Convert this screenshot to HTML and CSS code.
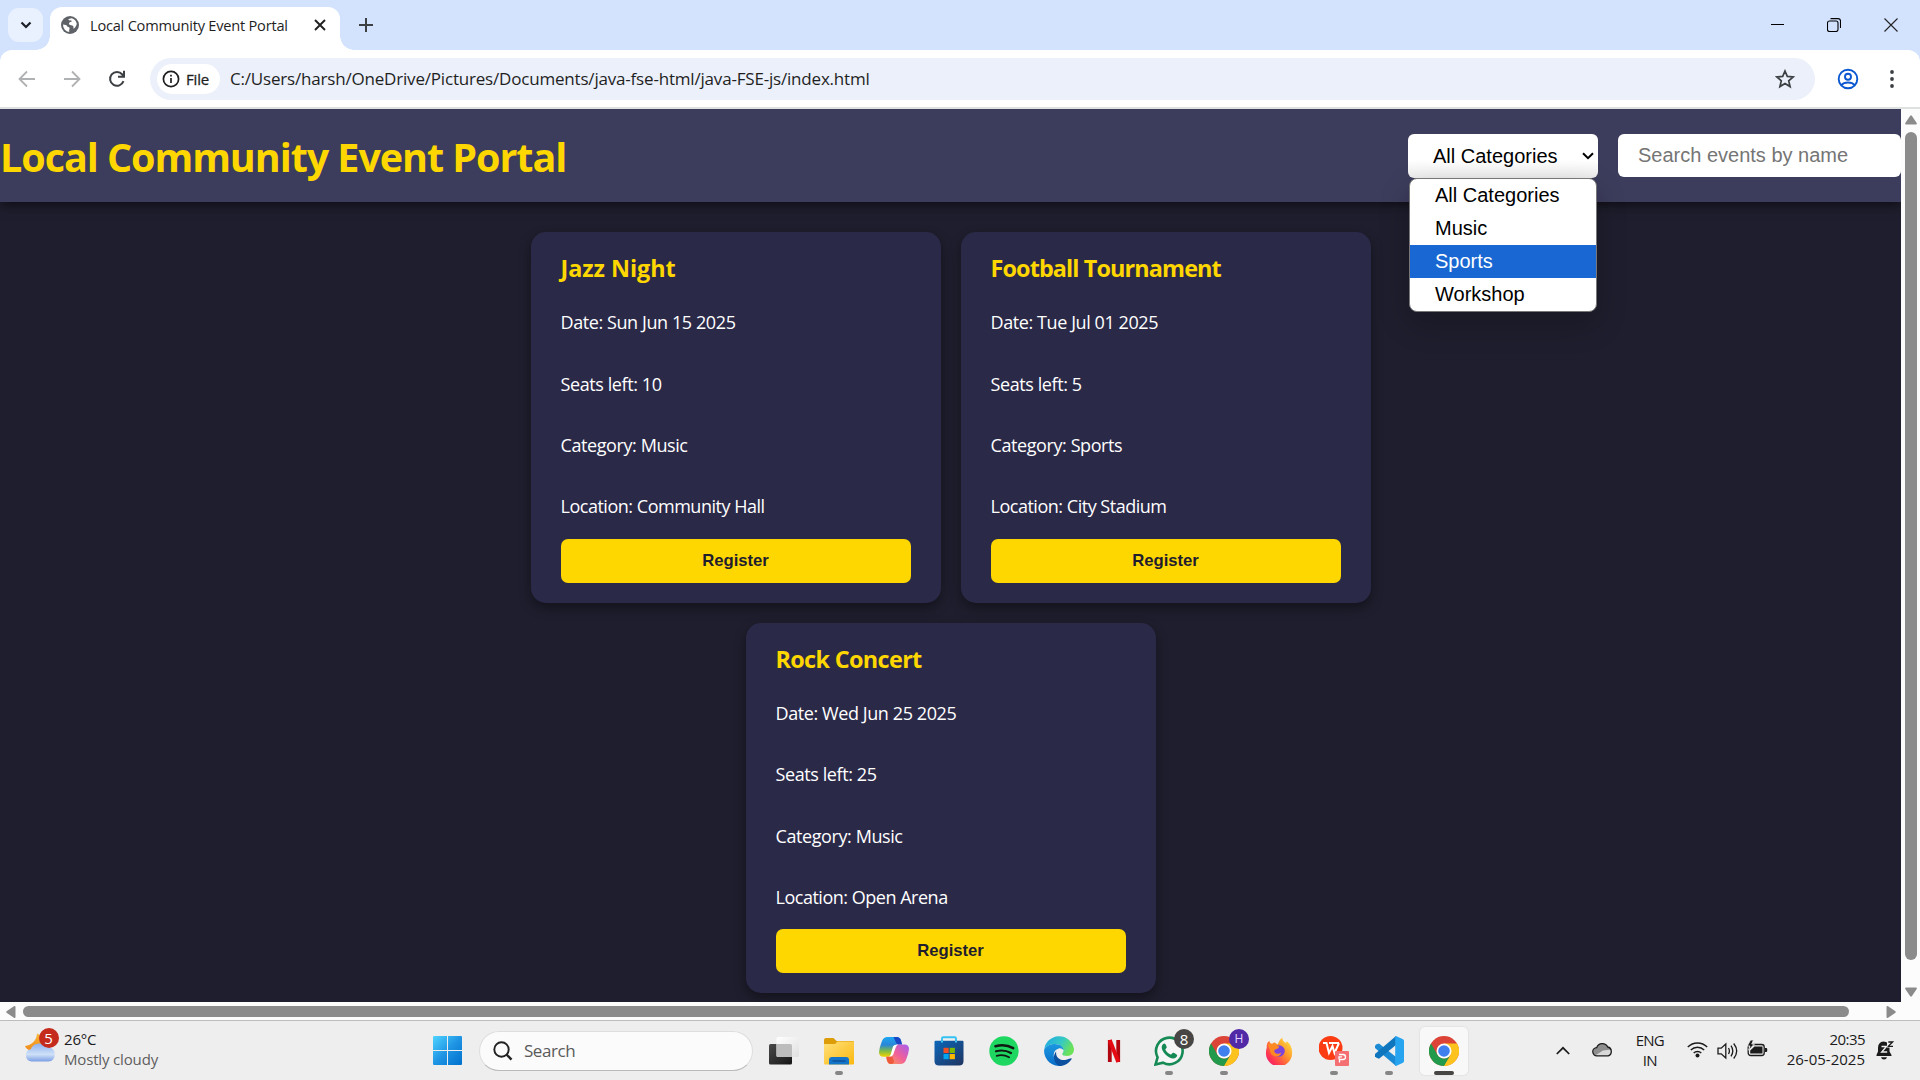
FILE: index.html
```
<!DOCTYPE html>
<html lang="en">
<head>
<meta charset="utf-8">
<title>Local Community Event Portal</title>
<link rel="stylesheet" href="styles.css">
</head>
<body>
<div class="desktop">

  <div class="tabstrip">
    <div class="tab-search"><svg width="12" height="8" viewBox="0 0 12 8"><path d="M1.5 1.5 6 6l4.500-4.500" fill="none" stroke="#1c1f24" stroke-width="2.200"/></svg></div>
    <div class="tab">
      <svg class="tab-globe" width="18" height="18" viewBox="0 0 18 18"><circle cx="9" cy="9" r="9" fill="#5f6368"/><path d="M2 8.600c2 .2 3.700.4 4 1.400.4 1.300 2.200.8 2.500 2 .2 1-.5 1.700-.3 3.900A7 7 0 0 1 2 8.600ZM7.200 3.400c1-.3 1.900-1 3.300-1.100 1.300.3 2.600 1 3.500 2 .9.900 1.600 2.300 1.800 3.700-.8 1.900-1.400 3.700-3 4.800-.7-.8.1-2-.7-2.800-1-.9-2.800-.2-3.800-1.400-.8-1.200.1-2.400 1.200-2.600 1-.2 1.500-.7 1.200-1.300-.7-.7-2.500.2-3.500-1.300Z" fill="#fff"/></svg>
      <span class="tab-title">Local Community Event Portal</span>
      <svg class="tab-close" width="12" height="12" viewBox="0 0 12 12"><path d="m1 1 10 10M11 1 1 11" stroke="#1f1f1f" stroke-width="1.900"/></svg>
    </div>
    <svg class="tab-new" width="14" height="14" viewBox="0 0 14 14"><path d="M7 0v14M0 7h14" stroke="#3c4043" stroke-width="2"/></svg>
    <div class="window-controls">
      <svg width="14" height="14" viewBox="0 0 14 14"><path d="M1 6.500h13" stroke="#000" stroke-width="1"/></svg>
      <svg width="14" height="14" viewBox="0 0 14 14"><path d="M.5 5a2 2 0 0 1 2-2H9a2 2 0 0 1 2 2v6.500a2 2 0 0 1-2 2H2.500a2 2 0 0 1-2-2ZM3.500.6H11a2.500 2.500 0 0 1 2.500 2.500V10" fill="none" stroke="#000" stroke-width="1.100"/></svg>
      <svg width="14" height="14" viewBox="0 0 14 14"><path d="m.5.5 13 13m0-13-13 13" stroke="#222" stroke-width="1.100"/></svg>
    </div>
  </div>

  <div class="toolbar">
    <svg class="nav-icon" width="18" height="18" viewBox="0 0 18 18"><path d="M17 9H2.500M9 1.500 1.500 9 9 16.500" fill="none" stroke="#b0b1b3" stroke-width="1.800"/></svg>
    <svg class="nav-icon" width="18" height="18" viewBox="0 0 18 18"><path d="M1 9h14.500M9 1.500 16.500 9 9 16.500" fill="none" stroke="#b0b1b3" stroke-width="1.800"/></svg>
    <svg class="nav-icon" width="18" height="18" viewBox="0 0 18 18"><path d="M15.500 11.200A6.900 6.900 0 1 1 14.300 4.500L16 6.500M16 .8v6h-6" fill="none" stroke="#3c4043" stroke-width="2"/></svg>
    <div class="omnibox">
      <div class="chip">
        <svg width="18" height="18" viewBox="0 0 18 18"><circle cx="9" cy="9" r="7.600" fill="none" stroke="#1f1f1f" stroke-width="1.700"/><path d="M9 8v5M9 4.800v1.800" stroke="#1f1f1f" stroke-width="1.700"/></svg>
        <span>File</span>
      </div>
      <span class="url">C:/Users/harsh/OneDrive/Pictures/Documents/java-fse-html/java-FSE-js/index.html</span>
      <svg class="star" width="20" height="20" viewBox="0 0 20 20"><path d="m10 2 2.300 5.400 5.900.5-4.500 3.900 1.400 5.800-5.100-3.100-5.100 3.100 1.400-5.800L1.800 7.900l5.900-.5Z" fill="none" stroke="#3c4043" stroke-width="1.700"/></svg>
    </div>
    <svg class="profile" width="22" height="22" viewBox="0 0 22 22"><g fill="none" stroke="#0b57d0" stroke-width="1.900"><circle cx="11" cy="11" r="9.300"/><circle cx="11" cy="8.700" r="3"/><path d="M4.300 17.200c3-3.600 10.400-3.600 13.400 0"/></g></svg>
    <svg class="menu-dots" width="4" height="20" viewBox="0 0 4 20"><g fill="#3c4043"><circle cx="2" cy="3" r="1.900"/><circle cx="2" cy="10" r="1.900"/><circle cx="2" cy="17" r="1.900"/></g></svg>
  </div>

  <div class="viewport">
    <div class="page">
      <header class="page-header">
        <h1>Local Community Event Portal</h1>
        <div class="filters">
          <div class="category">
            <div class="select"><span>All Categories</span><svg width="12" height="8" viewBox="0 0 12 8"><path d="M1 1.200 6 6.200l5-5" fill="none" stroke="#000" stroke-width="2"/></svg></div>
            <ul class="options">
              <li>All Categories</li>
              <li>Music</li>
              <li class="active">Sports</li>
              <li>Workshop</li>
            </ul>
          </div>
          <div class="search-field">Search events by name</div>
        </div>
      </header>
      <main class="events">
        <article class="event">
          <h2 class="title-short">Jazz Night</h2>
          <p>Date: Sun Jun 15 2025</p><p>Seats left: 10</p><p>Category: Music</p><p>Location: Community Hall</p>
          <button>Register</button>
        </article>
        <article class="event">
          <h2>Football Tournament</h2>
          <p>Date: Tue Jul 01 2025</p><p>Seats left: 5</p><p>Category: Sports</p><p>Location: City Stadium</p>
          <button>Register</button>
        </article>
        <article class="event">
          <h2 class="title-medium">Rock Concert</h2>
          <p>Date: Wed Jun 25 2025</p><p>Seats left: 25</p><p>Category: Music</p><p>Location: Open Arena</p>
          <button>Register</button>
        </article>
      </main>
    </div>
    <div class="vscroll">
      <svg width="12" height="10" viewBox="0 0 12 10"><path d="M5 .9Q6-.5 7 .9l4.700 7Q12.300 9.500 11 9.500H1Q-.3 9.500.3 7.900Z" fill="#8b8b8b"/></svg>
      <div class="vthumb"></div>
      <svg width="12" height="10" viewBox="0 0 12 10"><path d="M5 9.100q1 1.400 2 0l4.700-7Q12.300.5 11 .5H1Q-.3.5.3 2.100Z" fill="#8b8b8b"/></svg>
    </div>
  </div>
  <div class="hscroll">
    <svg width="10" height="12" viewBox="0 0 10 12"><path d="M.9 5Q-.5 6 .9 7l7 4.700Q9.500 12.300 9.500 11V1Q9.500-.3 7.900.3Z" fill="#8b8b8b"/></svg>
    <div class="hthumb"></div>
    <svg width="10" height="12" viewBox="0 0 10 12"><path d="M9.100 5q1.400 1 0 2l-7 4.700Q.5 12.300.5 11V1Q.5-.3 2.100.3Z" fill="#8b8b8b"/></svg>
  </div>

  <div class="taskbar">
    <svg width="0" height="0" class="defs"><defs>
      <linearGradient id="win" x1="0" y1="0" x2="1" y2="1"><stop offset="0" stop-color="#4fd4ff"/><stop offset=".5" stop-color="#1f95e4"/><stop offset="1" stop-color="#0070cc"/></linearGradient>
      <linearGradient id="moon" x1="0" y1="0" x2="0" y2="1"><stop offset="0" stop-color="#f7b634"/><stop offset="1" stop-color="#f08a1c"/></linearGradient>
      <linearGradient id="cloud" x1="0" y1="0" x2="0" y2="1"><stop offset="0" stop-color="#8fb2ef"/><stop offset=".6" stop-color="#cfe0f8"/><stop offset="1" stop-color="#7c9fe4"/></linearGradient>
      <linearGradient id="dark" x1="0" y1="0" x2="1" y2="1"><stop offset="0" stop-color="#4a4a4a"/><stop offset="1" stop-color="#151515"/></linearGradient>
      <linearGradient id="light" x1="0" y1="0" x2="1" y2="1"><stop offset="0" stop-color="#fff"/><stop offset="1" stop-color="#e0e0e0"/></linearGradient>
      <linearGradient id="folder" x1="0" y1="0" x2="1" y2="1"><stop offset="0" stop-color="#ffe07a"/><stop offset="1" stop-color="#fbb80f"/></linearGradient>
      <linearGradient id="copL" x1="0" y1="0" x2="0" y2="1"><stop offset="0" stop-color="#1ba6f2"/><stop offset=".4" stop-color="#2a86d8"/><stop offset=".7" stop-color="#7cbb4a"/><stop offset="1" stop-color="#f5d400"/></linearGradient>
      <linearGradient id="copR" x1="1" y1="0" x2="0" y2="1"><stop offset="0" stop-color="#a45cf0"/><stop offset=".5" stop-color="#f0609a"/><stop offset="1" stop-color="#ffa050"/></linearGradient>
      <linearGradient id="store" x1="0" y1="0" x2="1" y2="1"><stop offset="0" stop-color="#0b67bb"/><stop offset="1" stop-color="#20345f"/></linearGradient>
      <linearGradient id="edgeT" x1="0" y1="0" x2="1" y2=".4"><stop offset="0" stop-color="#1fa5e4"/><stop offset=".6" stop-color="#35c9c4"/><stop offset="1" stop-color="#6be25a"/></linearGradient>
      <linearGradient id="edgeB" x1="0" y1="0" x2="0" y2="1"><stop offset="0" stop-color="#1c98e0"/><stop offset="1" stop-color="#0a6cc8"/></linearGradient>
      <linearGradient id="fox" x1="1" y1="0" x2="0" y2="1"><stop offset="0" stop-color="#fff04a"/><stop offset=".4" stop-color="#ff9a2a"/><stop offset=".75" stop-color="#ff3650"/><stop offset="1" stop-color="#e31587"/></linearGradient>
      <symbol id="chrome" viewBox="0 0 30 30"><circle cx="15" cy="15" r="15" fill="#db4437"/><path d="M15 7.500h13A15 15 0 0 1 14.500 30l7-11.300Z" fill="#fcc31e"/><path d="M2 7.500 8.500 18.800A7.500 7.500 0 0 0 21.500 18.800L15 30A15 15 0 0 1 2 7.500Z" fill="#229a4c"/><circle cx="15" cy="15" r="7.500" fill="#fff"/><circle cx="15" cy="15" r="5.800" fill="#3f7fee"/></symbol>
    </defs></svg>

    <div class="weather">
      <div class="weather-icon">
        <svg width="32" height="32" viewBox="0 0 32 32"><path d="M12 1.500A13 13 0 0 1 0 14c2 5 10 7 15 3s5-12-3-15.500Z" fill="url(#moon)"/><path d="M6.500 29.500a6.200 6.200 0 0 1-.8-12.200 8.500 8.500 0 0 1 15-2 7 7 0 0 1 9 7 6.500 6.500 0 0 1-6 7.200Z" fill="url(#cloud)"/></svg>
        <span class="badge badge-red">5</span>
      </div>
      <div class="weather-text"><span>26°C</span><span class="muted">Mostly cloudy</span></div>
    </div>

    <div class="apps">
      <div class="app start"><svg width="29" height="29" viewBox="0 0 29 29"><path d="M1 0h13v14H0V1Q0 0 1 0Zm14 0h13q1 0 1 1v13H15ZM0 15h14v14H1q-1 0-1-1Zm15 0h14v13q0 1-1 1H15Z" fill="url(#win)"/></svg></div>
      <div class="task-search"><svg width="20" height="20" viewBox="0 0 20 20"><circle cx="8.500" cy="8.500" r="7.200" fill="none" stroke="#222" stroke-width="1.900"/><path d="m13.500 13.500 5 5.200" stroke="#222" stroke-width="2.400"/></svg><span>Search</span></div>
      <div class="app"><svg width="30" height="30" viewBox="0 0 30 30"><rect x="0" y="8" width="23" height="20.500" rx="1.500" fill="url(#dark)"/><rect x="7.500" y="1" width="22.500" height="20" rx="1.500" fill="url(#light)"/><path d="M7.500 8H21.500q1.500 0 1.500 1.500V21H9q-1.500 0-1.500-1.500Z" fill="#bdbdbd"/></svg></div>
      <div class="app running"><svg width="30" height="30" viewBox="0 0 30 30"><path d="M0 4q0-2 2-2h7.500l3 3H29q1 0 1 1v3H0Z" fill="#dc9d08"/><path d="M0 8h11l2.500-2.500H30v22q0 1-1 1H1q-1 0-1-1Z" fill="url(#folder)"/><path d="M5 28.500V24q0-3 3-3h14q3 0 3 3v4.500Z" fill="#1474c8"/><path d="M8.500 25h13" stroke="#0b4d95" stroke-width="1.300"/></svg></div>
      <div class="app"><svg width="30" height="30" viewBox="0 0 30 30"><path d="M15 1h3q3 0 4 3.500l1 4h-4q-3 0-4 3l-2.500 7.500q-.8 1.800-3 1.800H4.500Q0 20.800 0 16q.5-5 3-11Q4.500 1 8.500 1Z" fill="url(#copL)"/><path d="M14.500 1H18q3 0 4 3.500l1 4h-3.500q-2 0-3-3Z" fill="#1846c4"/><path d="M15 28h-3q-3 0-4-3.500l-.8-3.700h2.300q2.200 0 3-1.800L15 11.500q1-3 4-3h6.500Q30 8.500 30 13q-.5 5-3 11-1.500 4-5.500 4Z" fill="url(#copR)"/><path d="M7.200 20.800h2.300q2.200 0 3-1.800l2.200 5q1 4-2.700 4-3 0-4-3.500Z" fill="#ee5a3c"/><path d="M14 10.500q1-2 5-2-1.500.8-2.300 3l-2.500 7q-.8 2.300-4.200 2.200l1.500-1.700Z" fill="#fff"/></svg></div>
      <div class="app"><svg width="30" height="30" viewBox="0 0 30 30"><path d="M8 6V2.500Q8 1.200 9.300 1.200h11.400Q22 1.200 22 2.500V6" fill="none" stroke="#35c2f3" stroke-width="1.900"/><path d="M1.500 4.800h27q1 0 1 1V25q0 4.500-4.500 4.500H5Q.5 29.500.5 25V5.800q0-1 1-1Z" fill="url(#store)"/><path d="M8 4.800v1.700M22 4.800v1.700" stroke="#49cdf6" stroke-width="1.900"/><path d="M9.500 11.800h5.200V17H9.500Z" fill="#f25022"/><path d="M15.700 11.800h5.200V17h-5.200Z" fill="#7fba00"/><path d="M9.500 18h5.200v5.200H9.500Z" fill="#00a4ef"/><path d="M15.700 18h5.200v5.200h-5.200Z" fill="#ffb900"/></svg></div>
      <div class="app"><svg width="30" height="30" viewBox="0 0 30 30"><circle cx="15" cy="15" r="14.700" fill="#1ed760"/><g fill="none" stroke="#101a13" stroke-linecap="round"><path d="M6.500 10.200c6-1.600 12.500-1 17.700 1.900" stroke-width="2.600"/><path d="M7 15.300c5-1.400 10.500-.8 15 1.700" stroke-width="2.200"/><path d="M7.700 19.800c4.300-1.100 8.600-.6 12.400 1.500" stroke-width="1.800"/></g></svg></div>
      <div class="app"><svg width="30" height="30" viewBox="0 0 30 30"><path d="M.2 14A15 15 0 0 1 30 13c.2 4-2.500 7-6.800 7-3.500 0-5-1-5-2 0-.8 1.300-1.200 1.300-3.500C19.300 10.500 15.500 8 11 8 5.500 8 1.500 10.500.2 14Z" fill="url(#edgeT)"/><path d="M.1 14.500C1 10.500 5.500 8 11 8c5 0 8.500 2.800 8.500 6.300-1-1.500-3-2.300-4.800-1.800-4 1-6 5-4.500 9.500 1.400 4.200 4.800 6.500 8 7.600A15 15 0 0 1 .1 14.500Z" fill="url(#edgeB)"/><path d="M12.200 15.500c-1 6 4.500 9.500 10 8.300 2.500-.5 4-1.600 5-1.500.6.100.6.700.2 1.300C24.500 28 20 30.300 15.500 30 10 27.500 8 20 12.200 15.500Z" fill="#0c50a0"/></svg></div>
      <div class="app"><svg width="30" height="30" viewBox="0 0 30 30"><path d="M10.800 4v22M19.200 4v22" stroke="#b1060f" stroke-width="3.800"/><path d="m10.700 4 8.600 22" stroke="#e50914" stroke-width="4"/></svg></div>
      <div class="app running"><svg width="30" height="30" viewBox="0 0 30 30"><path d="M1.500 28.500 3.600 21.300A13.300 13.300 0 1 1 9 26.700Z" fill="#f6f6f6" stroke="#158a55" stroke-width="2.600"/><path d="M10.500 7.500c-1 0-2.800 1.500-2.800 3.800 0 5 7 11.200 11.500 11.200 2 0 4-1.500 4-3.200 0-.8-3.500-2.700-4.200-2.500-.7.200-1.400 1.900-2.200 1.800-1.700-.2-5.200-3.600-5.500-5 0-.8 1.500-1.500 1.500-2.300 0-.6-1.300-3.800-2.300-3.800Z" fill="#158a55"/></svg><span class="badge badge-dark">8</span></div>
      <div class="app running"><svg width="30" height="30"><use href="#chrome"/></svg><span class="badge badge-purple">H</span></div>
      <div class="app"><svg width="28" height="28" viewBox="0 0 30 30"><path d="M2 11Q1 7 4.500 4q.5 3 3 3.500 1.500-1.500 3-1.500l3 2Q15 3 18.500.5q0 4 4 6 .5-1.500 1-2 6 5 5.500 13A14 14 0 0 1 1 17.500q0-4 1-6.500Z" fill="url(#fox)"/><circle cx="15" cy="15" r="6.200" fill="#7b44dc"/><path d="M3 8q5-1.500 8 .5l4.500 2q-1 2.500-4.500 3-2.500 2 .5 4 3 1.500 6-1-1.500 5-7 4Q5.500 19 5 13Z" fill="#ff8a22"/></svg></div>
      <div class="app running"><svg width="30" height="30" viewBox="0 0 30 30"><circle cx="11.500" cy="12" r="12" fill="#fb3c12"/><path d="M4 7h3.500l2.500 10 3.500-7 2 7L20 7M10 7h10" fill="none" stroke="#fff" stroke-width="2"/><path d="M16.500 15h12.500q1 0 1 1v13q0 1-1 1H17q-1 0-1-1V16Z" fill="#f36f72"/><path d="M20 18.500h4q2.500 0 2.500 2.500T24 23.500h-3.500v3M23 20.800h-3v2.500" fill="none" stroke="#fff" stroke-width="1.300"/></svg></div>
      <div class="app running"><svg width="30" height="30" viewBox="0 0 30 30"><path d="m2 8.500 3-1L22 21v9L1 12v-2.200Z" fill="#1a8ad4"/><path d="m2 21.500 3 1.200L22 9V0L1 18v2.200Z" fill="#0f75bd"/><path d="m22 0 7 3.200q1 .6 1 1.800v20q0 1.200-1 1.800L22 30q-.8-.4-.8-1.600V1.600Q21.200.4 22 0Z" fill="#27a4f0"/></svg></div>
      <div class="app running current"><svg width="30" height="30"><use href="#chrome"/></svg></div>
    </div>

    <div class="tray">
      <svg class="t-chevron" width="14" height="9" viewBox="0 0 14 9"><path d="m.8 8 6.200-6.200L13.200 8" fill="none" stroke="#1b1b1b" stroke-width="1.700"/></svg>
      <svg class="t-cloud" width="21" height="15" viewBox="0 0 21 15"><path d="M5 13.800a4.100 4.100 0 0 1-.3-8.200 6 6 0 0 1 11-.6 4.600 4.600 0 0 1 .6 8.800Z" fill="#d8d8d8"/><path d="M1.500 8q1-2.500 3.200-2.400a6 6 0 0 1 11-.6q2.500 0 4 2.500L11 8.500 4 13Q0 11 1.500 8Z" fill="#8e8e8e"/><path d="M5 13.800a4.100 4.100 0 0 1-.3-8.200 6 6 0 0 1 11-.6 4.600 4.600 0 0 1 .6 8.800Z" fill="none" stroke="#1b1b1b" stroke-width="1.300"/></svg>
      <div class="lang"><span>ENG</span><span>IN</span></div>
      <svg class="t-wifi" width="21" height="17" viewBox="0 0 21 17"><g fill="none" stroke="#1b1b1b" stroke-width="1.400"><path d="M.8 6a13.700 13.700 0 0 1 19.400 0M3.800 9a9.500 9.500 0 0 1 13.400 0M6.700 12a5.400 5.400 0 0 1 7.600 0"/></g><circle cx="10.500" cy="14.500" r="2" fill="#1b1b1b"/></svg>
      <svg class="t-sound" width="21" height="18" viewBox="0 0 21 18"><g fill="none" stroke="#1b1b1b" stroke-width="1.300"><path d="M1 6.200h3.200L8.800 2v14l-4.600-4.200H1ZM11.500 6q1.800 3 0 6M14 3.700q3.600 5.300 0 10.600M16.700 1.500q6 7.500 0 15"/></g></svg>
      <svg class="t-battery" width="21" height="17" viewBox="0 0 21 17"><rect x="1.200" y="4.500" width="16" height="11" rx="2.500" fill="none" stroke="#1b1b1b" stroke-width="1.300"/><path d="M7.500 6.500h8v7H3.200V10.500ZM18 8h1.500q.8 0 .8 2t-.8 2H18Z" fill="#1b1b1b"/><path d="M3.500 0 .2 6h2.700L1.700 10.200l5.700-6.200H4.800L6.500 0Z" fill="#1b1b1b" stroke="#eee" stroke-width=".9"/></svg>
      <div class="clock"><span class="time">20:35</span><span>26-05-2025</span></div>
      <svg class="bell" width="18" height="21" viewBox="0 0 18 21"><path d="M7.500 1.500q5.500 0 6 6v4l2 3.500v1H.5v-1L2 11.500V8q0-6 5.500-6.500ZM5 17.300h6q-.5 2.200-3 2.200t-3-2.200Z" fill="#1b1b1b"/><path d="M11 .5h7v7h-7Z" fill="#eee"/><path d="M12.300 2h4.200l-4.200 4.300h4.700" fill="none" stroke="#1b1b1b" stroke-width="1.300"/><path d="M5.500 6.500h5L5.700 12h5.500" fill="none" stroke="#eee" stroke-width="1.400"/></svg>
    </div>
  </div>
</div>
</body>
</html>
```
FILE: styles.css
```
* { box-sizing: border-box; }
body { margin: 0; font-family: "Open Sans", "Noto Sans", sans-serif; }
svg { display: block; flex: none; }
h1, h2, p, ul { margin: 0; padding: 0; }
span, p, h1, h2, li { white-space: nowrap; }

.desktop {
  width: 1920px;
  height: 1080px;
  overflow: hidden;
  display: grid;
  grid-template-rows: 50px 59px 893px 18px 60px;
  background: #d3e3fd;
}

/* tab strip */
.tabstrip { display: flex; align-items: center; padding-left: 8px; }
.tab-search {
  width: 35px; height: 34px; border-radius: 11px;
  background: #eaf1fe;
  display: flex; align-items: center; justify-content: center;
}
.tab {
  position: relative;
  align-self: flex-end;
  width: 290px; height: 43px;
  margin-left: 7px;
  padding: 0 14px 7px 11px;
  border-radius: 12px 12px 0 0;
  background: #fff;
  display: flex; align-items: center;
}
.tab::before, .tab::after {
  content: "";
  position: absolute;
  bottom: 0;
  width: 14px; height: 14px;
}
.tab::before { left: -14px; background: radial-gradient(circle at 0 0, transparent 13.500px, #fff 14px); }
.tab::after { right: -14px; background: radial-gradient(circle at 100% 0, transparent 13.500px, #fff 14px); }
.tab-title { margin-left: 11px; font-size: 14.600px; line-height: 20px; letter-spacing: -0.220px; color: #1f1f1f; }
.tab-close { margin-left: auto; }
.tab-new { margin-left: 18.500px; }
.window-controls { margin: 0 22px 1px auto; display: flex; gap: 43px; }

/* address bar */
.toolbar {
  display: flex; align-items: center;
  padding: 0 26px 0 18px;
  border-bottom: 2px solid #dde2e0;
  border-radius: 12px 12px 0 0;
  background: #fff;
}
.nav-icon { margin-right: 27px; }
.omnibox {
  width: 1665px; height: 42px;
  margin-left: -3px;
  padding: 0 20px 0 7px;
  border-radius: 21px;
  background: #ebf0fa;
  display: flex; align-items: center;
}
.chip {
  width: 63px; height: 30px;
  padding-left: 5px;
  border-radius: 15px;
  background: #fff;
  display: flex; align-items: center; gap: 6px;
  font-size: 15px; letter-spacing: -0.180px; color: #1f1f1f;
  -webkit-text-stroke: 0.300px #1f1f1f;
}
.url { margin-left: 10px; font-size: 17px; letter-spacing: -0.190px; color: #1f1f1f; }
.star { margin-left: auto; }
.profile { margin-left: 21.500px; }
.menu-dots { margin-left: auto; }

/* web page */
.viewport { display: grid; grid-template-columns: 1901px 19px; }
.page { overflow: hidden; background: #1f1e2e; color: #fff; }
.page-header {
  position: relative;
  z-index: 1;
  height: 93px;
  background: #3c3c5c;
  box-shadow: 0 4px 10px rgba(0, 0, 0, 0.5);
  display: flex; align-items: center; justify-content: space-between;
}
h1 { padding-top: 2px; font-size: 39.500px; line-height: 54px; letter-spacing: -1.060px; color: #ffd700; }
.filters { display: flex; gap: 20px; padding-top: 1px; font-family: "Liberation Sans", Arial, sans-serif; font-size: 20px; }
.category { position: relative; width: 190px; }
.select {
  height: 44px; border-radius: 6px;
  padding: 0 4px 0 25px;
  background: linear-gradient(#fff 60%, #ececec);
  color: #000;
  display: flex; align-items: center; justify-content: space-between;
}
.options {
  position: absolute;
  top: 44px; left: 1px;
  width: 188px;
  list-style: none;
  border: 1px solid #777;
  border-radius: 8px;
  background: #fff; color: #000;
  box-shadow: 0 12px 30px rgba(0, 0, 0, 0.22);
  overflow: hidden;
  line-height: 33px;
}
.options li { padding-left: 25px; height: 33px; }
.options .active { background: #1967d2; color: #fff; }
.search-field {
  width: 283px; height: 43px; border-radius: 6px;
  padding-left: 20px;
  background: #fff; color: #757575;
  line-height: 43px;
}
.events {
  width: 860px;
  margin: 0 auto;
  padding-top: 30px;
  display: flex; flex-wrap: wrap; justify-content: center; gap: 20px;
}
.event {
  width: 410px;
  padding: 20.400px 30px 20px;
  border-radius: 15px;
  background: #2b2948;
  box-shadow: 0 5px 12px rgba(0, 0, 0, 0.4);
  font-size: 18px;
}
h2 { margin-bottom: 26px; font-size: 23.400px; line-height: 32px; letter-spacing: -0.880px; color: #ffd700; }
.title-short { letter-spacing: -0.060px; }
.title-medium { letter-spacing: -0.650px; }
.event p { margin-bottom: 37.300px; line-height: 24px; letter-spacing: -0.410px; }
.event p:last-of-type { margin-bottom: 20.300px; letter-spacing: -0.480px; }
.event button {
  display: block;
  width: 350px; height: 44px;
  padding: 0;
  border: 0; border-radius: 7px;
  background: #ffd700; color: #1f1e2e;
  font: bold 16.670px "Liberation Sans", Arial, sans-serif;
}

/* scrollbars */
.vscroll { background: #fcfcfc; display: flex; flex-direction: column; align-items: center; padding: 6px 0 5px; }
.vthumb { width: 12px; height: 828px; margin: 7px 0 auto; border-radius: 6px; background: #8b8b8b; }
.hscroll { background: #fcfcfc; display: flex; align-items: center; padding: 1px 24px 0 6px; }
.hthumb { width: 1826px; height: 11px; margin: 0 auto 0 7px; border-radius: 6px; background: #8b8b8b; }

/* taskbar */
.taskbar {
  position: relative;
  border-top: 1px solid #bdbdbd;
  background: #eee; color: #1b1b1b;
  font-size: 15px; line-height: 20px;
  display: flex; align-items: center;
}
.defs { position: absolute; }
.weather { width: 420px; padding-left: 25px; display: flex; align-items: center; }
.weather-icon { position: relative; margin-top: -6px; }
.weather-text { margin-left: 7px; padding-bottom: 3px; display: flex; flex-direction: column; letter-spacing: -0.160px; }
.muted { color: #5e5e5e; }
.badge {
  position: absolute;
  width: 20px; height: 20px; border-radius: 50%;
  font-size: 15px; line-height: 20px; text-align: center; color: #fff;
}
.badge-red { left: 13.500px; top: -4px; background: #c42b1c; }
.badge-dark { left: 33px; top: 2px; background: #484644; }
.badge-purple { left: 33px; top: 2px; background: #5128a6; font-size: 12px; color: #e0d4ff; }
.apps { display: flex; align-items: center; }
.app { position: relative; width: 55px; height: 48px; display: flex; align-items: center; justify-content: center; }
.start { margin-right: 4px; }
.task-search {
  width: 274px; height: 40px; margin-right: 3px;
  padding-left: 13px;
  border: 1px solid #dedede; border-bottom-color: #bbb; border-radius: 20px;
  background: #fbfbfb; color: #5a5a5a;
  font-size: 17px; letter-spacing: -0.450px;
  display: flex; align-items: center; gap: 11px;
}
.running::after {
  content: "";
  position: absolute;
  left: 24px; bottom: 0;
  width: 8px; height: 4px; border-radius: 2px;
  background: #868686;
}
.current { width: 48px; margin-left: 4px; border-radius: 5px; background: #f8f8f8; box-shadow: 0 0 1px 1px #e4e4e4; }
.current::after { left: 14px; width: 20px; background: #484644; }
.tray { margin-left: auto; display: flex; align-items: center; padding-right: 26px; }
.t-cloud { margin-left: 22px; margin-top: -3px; }
.lang { width: 30px; margin-left: 22px; padding-bottom: 2px; display: flex; flex-direction: column; align-items: center; letter-spacing: -0.800px; }
.t-wifi { margin-left: 22px; margin-top: -2px; }
.t-sound { margin-left: 9px; }
.t-battery { margin-left: 9px; margin-top: -4px; }
.clock { margin-left: 19px; padding-bottom: 3px; display: flex; flex-direction: column; align-items: flex-end; }
.time { letter-spacing: -0.540px; }
.bell { margin-left: 11px; }
```
